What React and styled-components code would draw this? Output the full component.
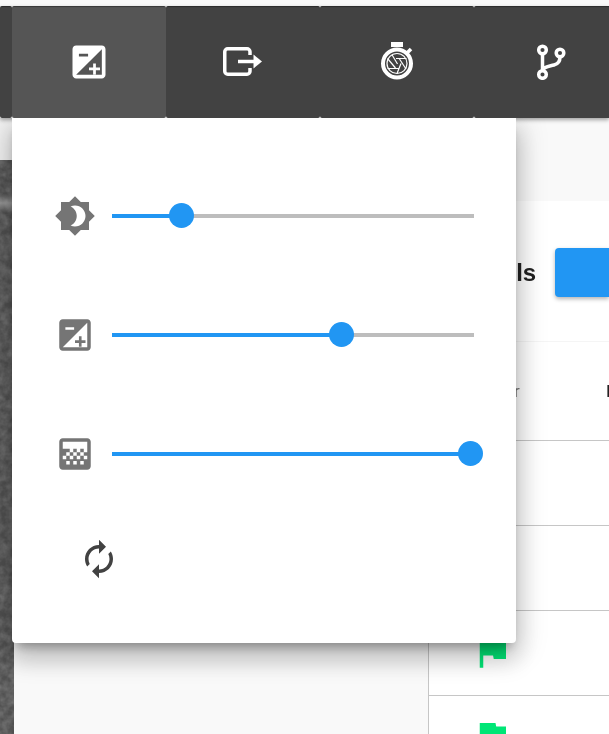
import React from 'react';
import styled, { createGlobalStyle } from 'styled-components';

const Global = createGlobalStyle`
  html, body { margin: 0; padding: 0; height: 734px; overflow: hidden; background: #f9f9f9; }
  body { font-family: Roboto, "Liberation Sans", sans-serif; }
  * { box-sizing: border-box; }
`;

const Page = styled.div`
  position: relative;
  width: 609px;
  height: 734px;
  overflow: hidden;
  display: flex;
  flex-direction: column;
  padding-top: 6px;
`;

const Toolbar = styled.div`
  position: relative;
  z-index: 3;
  flex: none;
  height: 112px;
  display: flex;
  box-shadow: 0 2px 4px rgba(0, 0, 0, 0.35);
`;

const ToolButton = styled.button`
  flex: none;
  width: ${p => p.$width || 154}px;
  height: 112px;
  padding: 0;
  border: 0;
  border-radius: 2px;
  background: ${p => (p.$active ? '#555555' : '#424242')};
  box-shadow: inset 0 2px 1px -1px rgba(0,0,0,0.35);
  color: #fff;
  display: flex;
  align-items: center;
  justify-content: center;
`;

const Body = styled.div`
  flex: 1;
  display: flex;
  min-height: 0;
`;

const Photo = styled.div`
  flex: none;
  width: 14px;
  display: flex;
  flex-direction: column;
`;

const PhotoGap = styled.div`
  flex: none;
  height: 42px;
  background: #f4f4f4;
`;

const PhotoImage = styled.svg`
  flex: 1;
  display: block;
  width: 14px;
`;

const Middle = styled.div`
  flex: none;
  width: 414px;
  background: #f9f9f9;
`;

const Side = styled.div`
  flex: 1;
  display: flex;
  flex-direction: column;
  margin-top: 83px;
  background: #fff;
  border-left: 1px solid #c6c6c6;
  min-width: 0;
`;

const SideHeader = styled.div`
  flex: none;
  height: 141px;
  border-bottom: 1px solid #f5f5f5;
  display: flex;
  align-items: center;
  justify-content: flex-end;
  gap: 19px;
  padding-top: 3px;
`;

const SideTitle = styled.span`
  font-weight: 700;
  font-size: 24px;
  color: #212121;
  font-family: "Liberation Sans", sans-serif;
  will-change: transform;
`;

const BlueButton = styled.div`
  width: 54px;
  height: 49px;
  background: #2196f3;
  border-radius: 4px 0 0 4px;
  box-shadow: 0 2px 4px rgba(0, 0, 0, 0.3);
`;

const HeadRow = styled.div`
  flex: none;
  height: 99px;
  border-bottom: 1px solid #c6c6c6;
  display: flex;
  align-items: center;
  gap: 86px;
  padding-left: 40px;
  padding-bottom: 1px;
  font-size: 17px;
  white-space: nowrap;
`;

const HeadCell = styled.span`
  flex: none;
  color: ${p => (p.$strong ? '#212121' : '#757575')};
  will-change: transform;
`;

const Row = styled.div`
  flex: none;
  height: 85px;
  border-bottom: 1px solid #c6c6c6;
  padding-left: 42px;
  padding-top: ${p => p.$top || 0}px;
  color: #00e676;
  line-height: 0;
`;

const Popup = styled.div`
  position: absolute;
  z-index: 4;
  left: 12px;
  top: 118px;
  width: 504px;
  height: 525px;
  background: #fff;
  border-radius: 0 0 4px 4px;
  box-shadow: 0 8px 10px -5px rgba(0,0,0,0.3), 0 16px 24px 2px rgba(0,0,0,0.16), 0 6px 30px 5px rgba(0,0,0,0.14);
  clip-path: inset(0 -50px -50px -50px);
  padding: 38px 42px 0;
  display: flex;
  flex-direction: column;
`;

const SliderRow = styled.div`
  flex: none;
  height: 119px;
  display: flex;
  align-items: center;
  color: #757575;
`;

const Slider = styled.div`
  position: relative;
  margin-left: 16px;
  width: 362px;
  height: 4px;
  background: #bdbdbd;
`;

const SliderFill = styled.div`
  height: 100%;
  background: #2196f3;
`;

const Thumb = styled.div`
  position: absolute;
  top: 50%;
  width: 25px;
  height: 25px;
  margin: -12.5px 0 0 -12.5px;
  border-radius: 50%;
  background: #2196f3;
`;

const ResetButton = styled.div`
  flex: none;
  margin: 25px 0 0 24px;
  color: #424242;
  line-height: 0;
`;

const Svg = styled.svg`
  flex: none;
  display: block;
`;

const Icon = ({ d, size = 42 }) => (
  <Svg width={size} height={size} viewBox="0 0 24 24" fill="currentColor"><path d={d} /></Svg>
);

const EXPOSURE = 'M19 3H5c-1.1 0-2 .9-2 2v14c0 1.1.9 2 2 2h14c1.1 0 2-.9 2-2V5c0-1.1-.9-2-2-2zM6.5 7.5h5V9h-5V7.5zM19 19H5L19 5v14zM12 15h2.25v-2.25h1.5V15H18v1.5h-2.25v2.25h-1.5V16.5H12z';
const BRIGHTNESS = 'M20 8.69V4h-4.69L12 .69 8.69 4H4v4.69L.69 12 4 15.31V20h4.69L12 23.31 15.31 20H20v-4.69L23.31 12 20 8.69zM12 18c-.89 0-1.74-.2-2.5-.55C11.56 16.5 13 14.42 13 12s-1.44-4.5-3.5-5.45C10.26 6.2 11.11 6 12 6c3.31 0 6 2.69 6 6s-2.69 6-6 6z';
const GRADIENT = 'M11 9h2v2h-2zm-2 2h2v2H9zm4 0h2v2h-2zm2-2h2v2h-2zM7 9h2v2H7zm12-6H5c-1.1 0-2 .9-2 2v14c0 1.1.9 2 2 2h14c1.1 0 2-.9 2-2V5c0-1.1-.9-2-2-2zM9 18H7v-2h2v2zm4 0h-2v-2h2v2zm4 0h-2v-2h2v2zm2-7h-2v2h2v2h-2v-2h-2v2h-2v-2h-2v2H9v-2H7v2H5v-2h2V9H5V5h14v6z';
const AUTORENEW = 'M12 6v3l4-4-4-4v3c-4.42 0-8 3.58-8 8 0 1.57.46 3.03 1.24 4.26L6.7 14.8c-.45-.83-.7-1.79-.7-2.8 0-3.31 2.69-6 6-6zm6.76 1.74L17.3 9.2c.44.84.7 1.79.7 2.8 0 3.31-2.69 6-6 6v-3l-4 4 4 4v-3c4.42 0 8-3.58 8-8 0-1.57-.46-3.03-1.24-4.26z';
const FLAG = 'M14.4 6L14 4H5v17h2v-7h5.6l.4 2h7V6z';

const ExitIcon = () => (
  <Svg width="40" height="30" viewBox="0 0 40 30" fill="none" stroke="currentColor" strokeWidth="3.5">
    <path d="M27 8V4.750a3 3 0 0 0-3-3H4.750a3 3 0 0 0-3 3v19.500a3 3 0 0 0 3 3H24a3 3 0 0 0 3-3V21" />
    <path d="M15 14.500h17" />
    <path d="M30.500 7.500 39 14.500l-8.500 7z" fill="currentColor" stroke="none" />
  </Svg>
);

const TimerIcon = () => (
  <Svg width="36" height="40" viewBox="0 0 36 40" fill="none" stroke="currentColor">
    <path d="M12 2.500h12" strokeWidth="5" />
    <path d="M28 11l4-4" strokeWidth="3.500" />
    <circle cx="18" cy="21.500" r="14" strokeWidth="4" />
    <circle cx="18" cy="21.500" r="10" strokeWidth="1.200" />
    <path d="M13 12.800 18.500 22M27.500 16.500H17M27 27l-6.500-10M18 31.500l4-10M8.500 26.500H20M8.500 16.500l8 9.500" strokeWidth="1.200" />
  </Svg>
);

const BranchIcon = () => (
  <Svg width="32" height="36" viewBox="0 0 32 36" fill="none" stroke="currentColor" strokeWidth="3.500">
    <circle cx="7.500" cy="6" r="3.800" />
    <circle cx="25" cy="9" r="3.800" />
    <circle cx="7.500" cy="30.500" r="3.800" />
    <path d="M7.500 10v16.500M25 13c0 5-2 7-6 8-6 1.500-9.500 1.500-11.500 5" />
  </Svg>
);

const SliderLine = ({ icon, value }) => (
  <SliderRow>
    <Icon d={icon} />
    <Slider>
      <SliderFill style={{ width: `${value}%` }} />
      <Thumb style={{ left: `${value}%` }} />
    </Slider>
  </SliderRow>
);

const PhotoTexture = () => (
  <PhotoImage viewBox="0 0 14 574" preserveAspectRatio="none">
    <defs>
      <filter id="grain" x="0" y="0" width="100%" height="100%">
        <feTurbulence type="fractalNoise" baseFrequency="0.12" numOctaves="3" seed="4" />
        <feColorMatrix values="0 0 0 0 0.3  0 0 0 0 0.3  0 0 0 0 0.3  0.9 0 0 0 -0.25" />
      </filter>
      <linearGradient id="band" x1="0" y1="0" x2="0" y2="1">
        <stop offset="0" stopColor="#bbb" stopOpacity="0" />
        <stop offset="0.5" stopColor="#bbb" stopOpacity="0.6" />
        <stop offset="1" stopColor="#bbb" stopOpacity="0" />
      </linearGradient>
    </defs>
    <rect width="14" height="574" fill="#505050" />
    <rect width="14" height="574" fill="#3a3a3a" filter="url(#grain)" />
    <rect y="33" width="14" height="20" fill="url(#band)" />
  </PhotoImage>
);

export default function App() {
  return (
    <Page>
      <Global />
      <Toolbar>
        <ToolButton $width={12} aria-label="menu" />
        <ToolButton $active><Icon d={EXPOSURE} size={44} /></ToolButton>
        <ToolButton><ExitIcon /></ToolButton>
        <ToolButton><TimerIcon /></ToolButton>
        <ToolButton><BranchIcon /></ToolButton>
      </Toolbar>
      <Body>
        <Photo>
          <PhotoGap />
          <PhotoTexture />
        </Photo>
        <Middle />
        <Side>
          <SideHeader>
            <SideTitle>Tools</SideTitle>
            <BlueButton />
          </SideHeader>
          <HeadRow><HeadCell>Author</HeadCell><HeadCell $strong>Date</HeadCell></HeadRow>
          <Row />
          <Row />
          <Row $top={20}><Icon d={FLAG} /></Row>
          <Row $top={20}><Icon d={FLAG} /></Row>
        </Side>
      </Body>
      <Popup>
        <SliderLine icon={BRIGHTNESS} value={19.25} />
        <SliderLine icon={EXPOSURE} value={63.3} />
        <SliderLine icon={GRADIENT} value={99} />
        <ResetButton><Icon d={AUTORENEW} /></ResetButton>
      </Popup>
    </Page>
  );
}
